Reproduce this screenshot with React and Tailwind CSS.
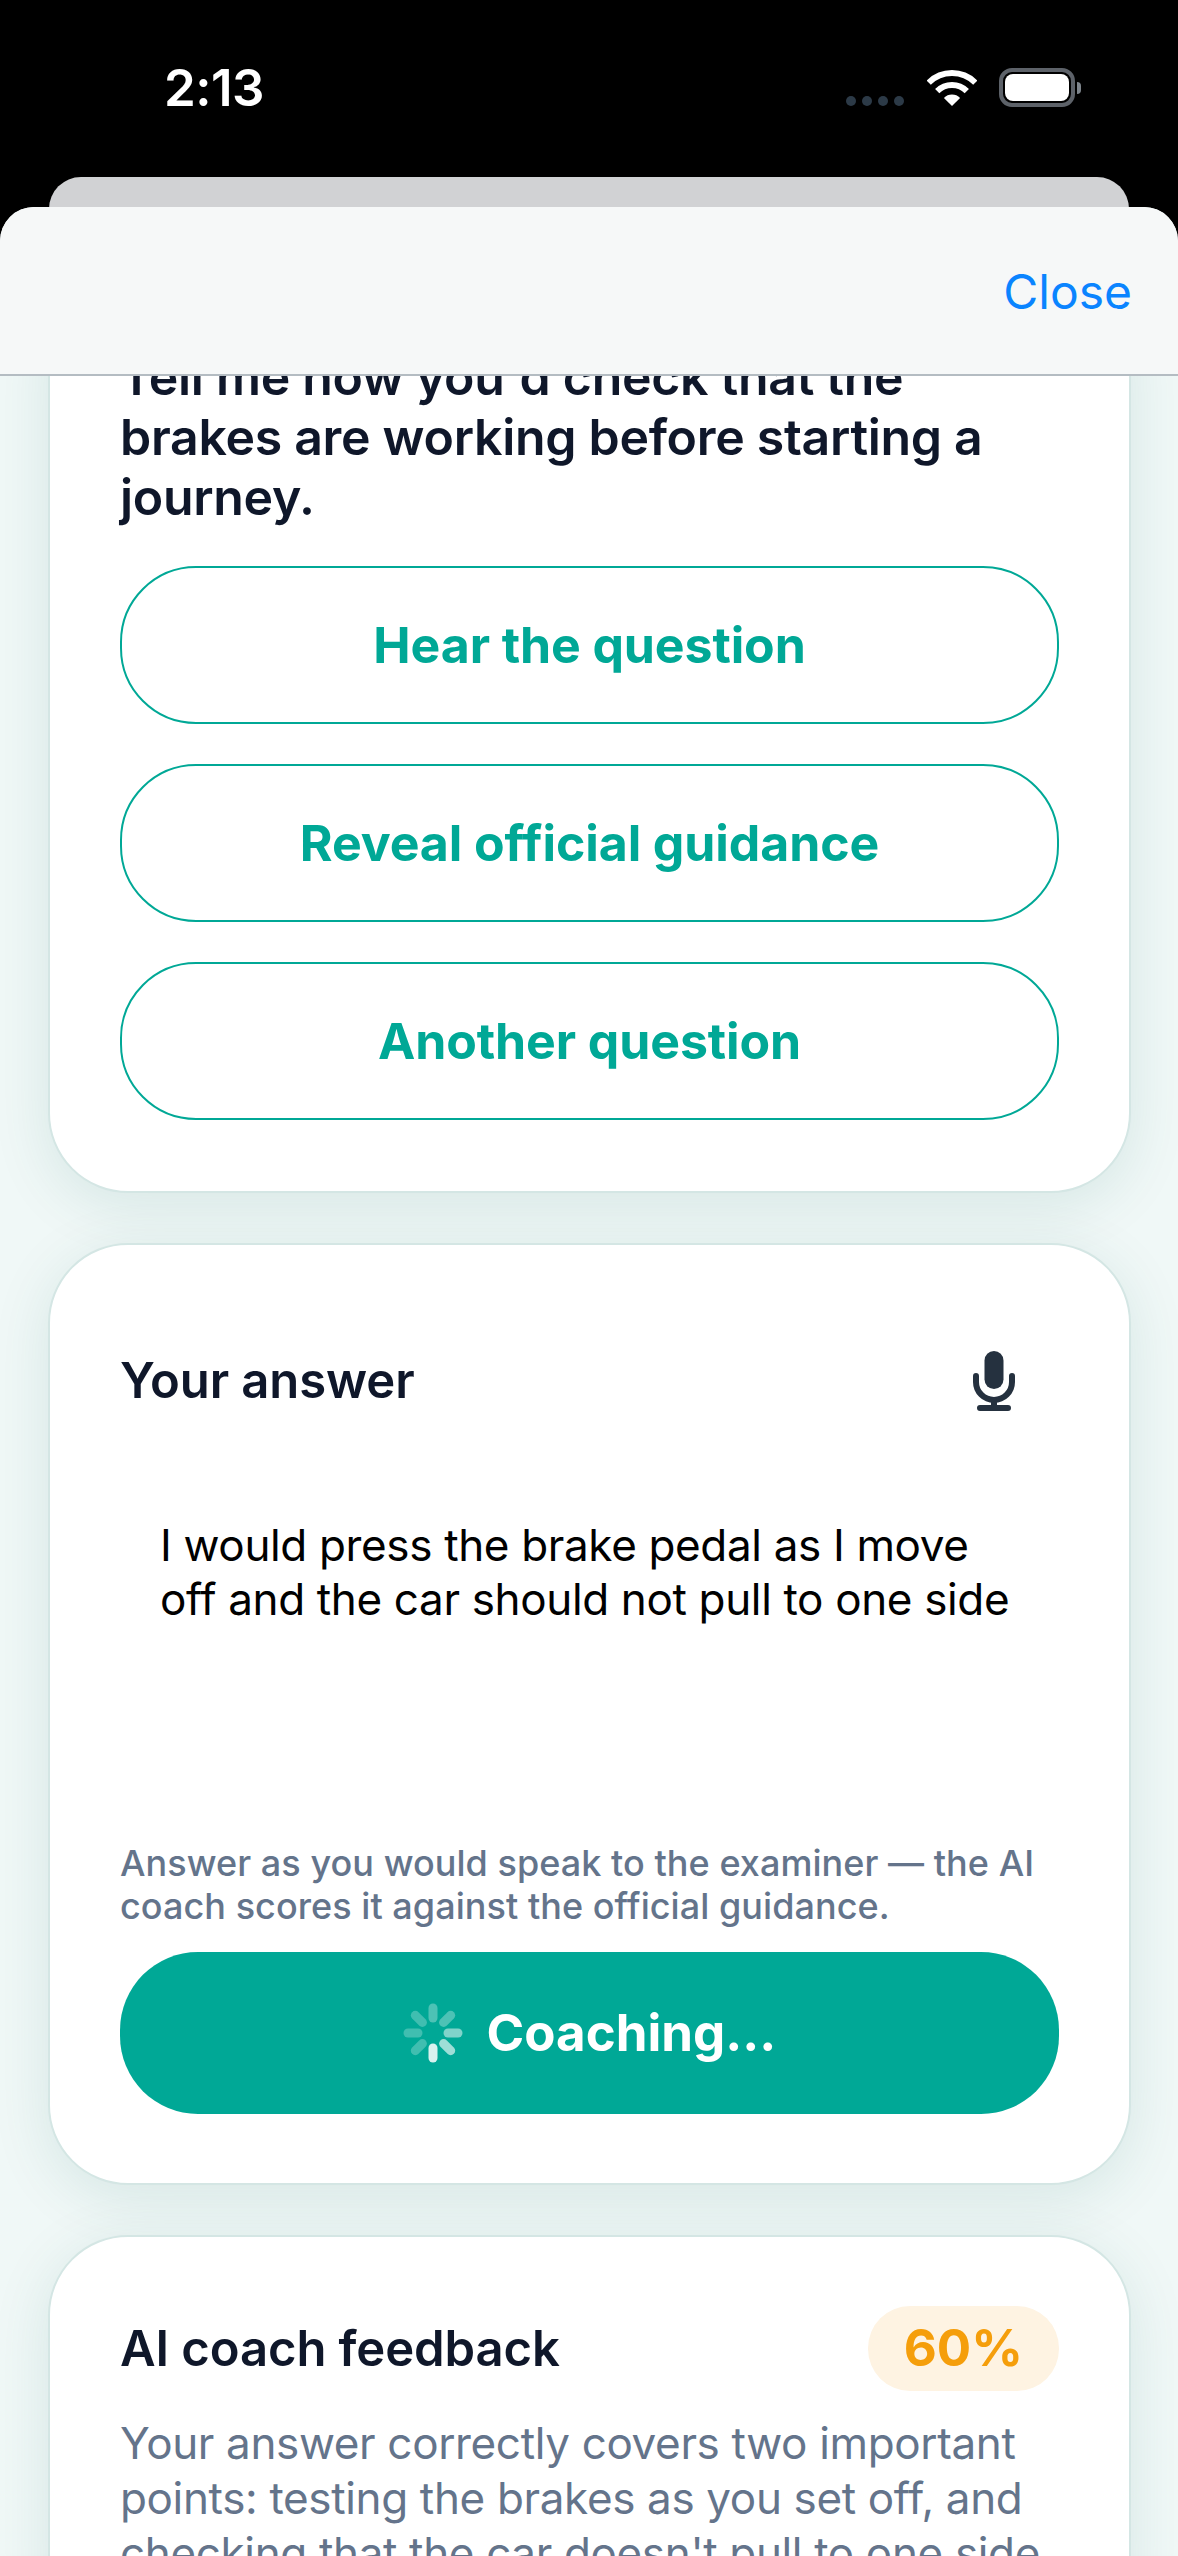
const spinnerBars = [
  { angle: 0, alpha: 0.3 },
  { angle: 45, alpha: 0.3 },
  { angle: 90, alpha: 0.5 },
  { angle: 135, alpha: 0.62 },
  { angle: 180, alpha: 0.85 },
  { angle: 225, alpha: 0.25 },
  { angle: 270, alpha: 0.25 },
  { angle: 315, alpha: 0.25 },
];

function Spinner() {
  return (
    <svg width="60" height="60" viewBox="0 0 60 60" className="shrink-0">
      {spinnerBars.map((bar) => (
        <line
          key={bar.angle}
          x1="30"
          y1="5"
          x2="30"
          y2="15"
          stroke="#fff"
          strokeWidth="9"
          strokeLinecap="round"
          opacity={bar.alpha}
          transform={`rotate(${bar.angle} 30 30)`}
        />
      ))}
    </svg>
  );
}

function WifiIcon() {
  return (
    <svg width="50" height="37" viewBox="0 0 50 37">
      <path d="M1.7 13.7 A33 33 0 0 1 48.3 13.7" fill="none" stroke="#fff" strokeWidth="6" />
      <path d="M10.2 22.2 A21 21 0 0 1 39.8 22.2" fill="none" stroke="#fff" strokeWidth="6" />
      <path d="M25 37 L16.9 28.9 A11.5 11.5 0 0 1 33.1 28.9 Z" fill="#fff" />
    </svg>
  );
}

function MicIcon() {
  return (
    <svg width="42" height="60" viewBox="0 0 42 60">
      <rect x="11.5" y="0" width="19" height="38" rx="9.5" fill="#25313f" />
      <path d="M3 25 v6 a18 18 0 0 0 36 0 v-6" fill="none" stroke="#25313f" strokeWidth="6" strokeLinecap="round" />
      <path d="M21 49 v8 M7 57 h28" fill="none" stroke="#25313f" strokeWidth="6" strokeLinecap="round" />
    </svg>
  );
}

function StatusBar() {
  return (
    <div className="h-[177px] shrink-0 flex justify-between pl-[164px] pr-[97px] pt-[60px]">
      <span className="text-[51px] leading-[56px] font-semibold text-white tracking-[-0.5px]">2:13</span>
      <div className="flex items-start pt-[8px]">
        <div className="flex gap-[6px] mt-[28px] mr-[23px]">
          <span className="w-[10px] h-[10px] rounded-full bg-[#2c3a47]" />
          <span className="w-[10px] h-[10px] rounded-full bg-[#2c3a47]" />
          <span className="w-[10px] h-[10px] rounded-full bg-[#2c3a47]" />
          <span className="w-[10px] h-[10px] rounded-full bg-[#2c3a47]" />
        </div>
        <div className="mt-[1px] mr-[22px]">
          <WifiIcon />
        </div>
        <div className="flex items-center">
          <div className="w-[76px] h-[39px] rounded-[13px] border-[4px] border-[#5d6269] p-[2px]">
            <div className="w-full h-full rounded-[8px] bg-white" />
          </div>
          <div className="w-[4px] h-[12px] ml-[2px] rounded-r-full bg-[#7e858c]" />
        </div>
      </div>
    </div>
  );
}

function OutlineButton({ label }) {
  return (
    <button className="h-[158px] w-full rounded-[76px] border-2 border-[#00a896] text-[50px] font-bold tracking-[-0.1px] text-[#00a896]">
      {label}
    </button>
  );
}

const cardClass =
  "rounded-[80px] border-2 border-[#d4e6e4] bg-white px-[70px] shadow-[0_12px_60px_rgba(0,90,80,0.11)]";

export default function App() {
  return (
    <div className="w-[1178px] h-[2556px] overflow-hidden bg-black flex flex-col font-['Inter',sans-serif]">
      <StatusBar />
      <div className="h-[60px] shrink-0 ml-[49px] mr-[49px] rounded-t-[32px] bg-[#d1d2d4]" />

      <div className="relative -mt-[30px] flex-1 min-h-0 flex flex-col overflow-hidden rounded-t-[34px] bg-[#f0f8f7]">
        <header className="h-[169px] shrink-0 flex items-center justify-end pr-[46px] pt-[3px] border-b-2 border-[#b4bcc2] bg-[#f6f8f8]">
          <span className="text-[48px] text-[#0a84ff]">Close</span>
        </header>

        <main className="flex-1 min-h-0 overflow-hidden pl-[48px] pr-[47px] flex flex-col gap-[50px]">
          <section className={`${cardClass} -mt-[100px] pt-[69px] pb-[71px] shrink-0`}>
            <p className="text-[50px] leading-[60px] font-semibold tracking-[-0.3px] text-[#0f172a]">
              Tell me how you'd check that the brakes are working before starting a journey.
            </p>
            <div className="mt-[39px] flex flex-col gap-[40px]">
              <OutlineButton label="Hear the question" />
              <OutlineButton label="Reveal official guidance" />
              <OutlineButton label="Another question" />
            </div>
          </section>

          <section className={`${cardClass} pt-[106px] pb-[69px] shrink-0`}>
            <div className="flex items-center justify-between pr-[44px] h-[60px]">
              <h2 className="text-[49px] font-semibold tracking-[-0.1px] text-[#0f172a]">Your answer</h2>
              <MicIcon />
            </div>
            <div className="mt-[107px] h-[324px] pl-[40px] pr-[34px] text-[44px] leading-[54px] tracking-[-0.35px] text-black">
              I would press the brake pedal as I move off and the car should not pull to one side
            </div>
            <p className="text-[36px] leading-[43px] font-medium tracking-[0.05px] text-[#64748b]">
              Answer as you would speak to the examiner — the AI coach scores it against the official guidance.
            </p>
            <button className="mt-[24px] h-[162px] w-full rounded-[78px] bg-[#00a896] flex items-center justify-center gap-[24px] text-[51px] font-bold text-white">
              <Spinner />
              Coaching...
            </button>
          </section>

          <section className={`${cardClass} pt-[69px] pb-[66px] shrink-0`}>
            <div className="flex items-center justify-between h-[85px]">
              <h2 className="text-[49px] font-semibold tracking-[-0.1px] text-[#0f172a]">AI coach feedback</h2>
              <span className="h-[85px] px-[36px] flex items-center rounded-[42px] bg-[#fef3e2] text-[51px] font-bold text-[#f59e0b]">
                60%
              </span>
            </div>
            <p className="mt-[25px] text-[44px] leading-[55px] tracking-[-0.35px] text-[#64748b]">
              Your answer correctly covers two important points: testing the brakes as you set off, and checking that the car doesn't pull to one side.
            </p>
          </section>
        </main>
      </div>
    </div>
  );
}
